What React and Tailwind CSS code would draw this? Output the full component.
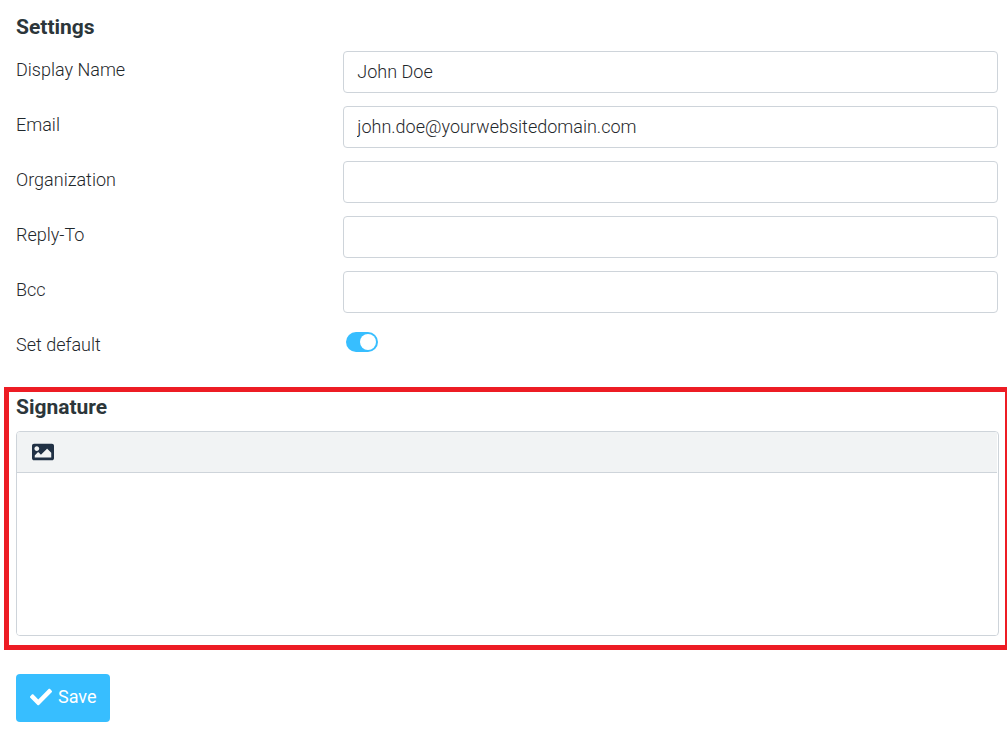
import { useState } from 'react';
import { FaCheck, FaImage } from 'react-icons/fa';

const fields = [
  { id: 'name', label: 'Display Name', type: 'text', value: 'John Doe' },
  { id: 'email', label: 'Email', type: 'email', value: 'john.doe@yourwebsitedomain.com' },
  { id: 'organization', label: 'Organization', type: 'text', value: '' },
  { id: 'reply-to', label: 'Reply-To', type: 'email', value: '' },
  { id: 'bcc', label: 'Bcc', type: 'email', value: '' },
];

function Field({ id, label, type, value }) {
  return (
    <div className="flex items-start">
      <label htmlFor={id} className="w-1/3 shrink-0 pt-1.5">
        {label}
      </label>
      <input
        id={id}
        type={type}
        defaultValue={value}
        className="h-[42px] min-w-0 flex-1 rounded border border-[#ced4da] bg-white px-[13px] pb-0.5 outline-none focus:border-[#37beff]"
      />
    </div>
  );
}

function Toggle({ id, checked, onChange }) {
  return (
    <input
      id={id}
      type="checkbox"
      role="switch"
      checked={checked}
      onChange={(e) => onChange(e.target.checked)}
      className="flex h-5 w-8 cursor-pointer appearance-none items-center rounded-full bg-gray-300 px-0.5 before:size-4 before:rounded-full before:bg-white checked:justify-end checked:bg-[#37beff]"
    />
  );
}

export default function App() {
  const [isDefault, setIsDefault] = useState(true);

  return (
    <form
      onSubmit={(e) => e.preventDefault()}
      className="min-h-screen bg-white pt-3 font-['Roboto',sans-serif] text-lg leading-[26px] font-[350] text-[#1f282c]"
    >
      {/* Settings */}
      <section className="pr-[9px] pl-4">
        <h2 className="mb-[9px] text-[21px] leading-[30px] font-bold text-[#2c363a]">Settings</h2>
        <div className="space-y-[13px]">
          {fields.map((field) => (
            <Field key={field.id} {...field} />
          ))}
          <div className="flex items-start">
            <label htmlFor="default" className="w-1/3 shrink-0 pt-1.5">
              Set default
            </label>
            <div className="pt-1.5 pl-[3px]">
              <Toggle id="default" checked={isDefault} onChange={setIsDefault} />
            </div>
          </div>
        </div>
      </section>

      {/* Signature */}
      <section className="mt-[29px] ml-1 border-5 border-r-2 border-[#ed1c24] pr-1.5 pb-[9px] pl-[7px]">
        <h2 className="mb-[9px] text-[21px] leading-[30px] font-bold text-[#2c363a]">
          <label htmlFor="signature">Signature</label>
        </h2>
        <div className="overflow-hidden rounded border border-[#ced4da] pr-px">
          <div className="flex h-[41px] items-center border-b border-[#ced4da] bg-[#f1f3f4] pl-[15px]">
            <button type="button" aria-label="Insert image" className="text-[#213145]">
              <FaImage className="size-[22px]" />
            </button>
          </div>
          <textarea
            id="signature"
            className="block h-[162px] w-full resize-none bg-white px-3.5 py-2 outline-none"
          />
        </div>
      </section>

      <button
        type="submit"
        className="mt-6 ml-4 flex h-12 items-center gap-1.5 rounded bg-[#37beff] pr-[13px] pb-0.5 pl-3.5 font-normal text-white"
      >
        <FaCheck className="size-[22px]" />
        Save
      </button>
    </form>
  );
}
